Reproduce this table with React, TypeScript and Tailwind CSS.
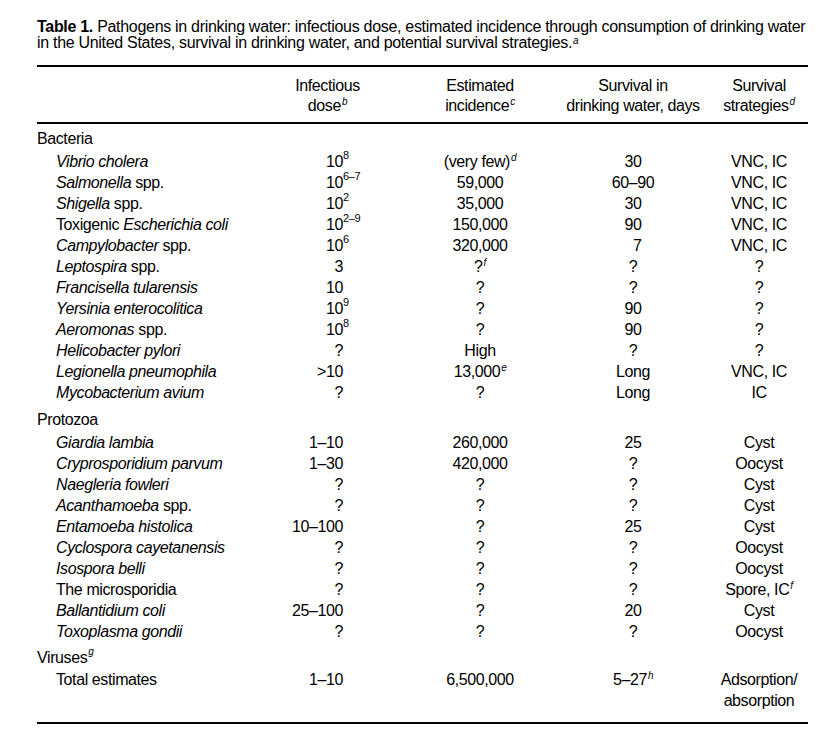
import React from "react";

type Row = {
    name: React.ReactNode;
    dose: React.ReactNode;
    inc: React.ReactNode;
    surv: React.ReactNode;
    strat: React.ReactNode;
};

// Footnote marker (italic letter, raised)
const Sup: React.FC<{ children: React.ReactNode; className?: string }> = ({ children, className }) => (
    <span className={`relative text-[10px] italic leading-none ml-[1px] ${className ?? "top-[-6px]"}`}>{children}</span>
);

// Power of ten, the exponent hangs past the column edge
const Pow: React.FC<{ exp: string }> = ({ exp }) => (
    <span className="relative">
        10
        <span className="absolute left-full top-[-3px] text-[11px] leading-none whitespace-nowrap">{exp}</span>
    </span>
);

const Sp: React.FC<{ name: string; rest?: string }> = ({ name, rest }) => (
    <>
        <i>{name}</i>
        {rest && <> {rest}</>}
    </>
);

const bacteria: Row[] = [
    { name: <Sp name="Vibrio cholera" />, dose: <Pow exp="8" />, inc: <>(very few)<Sup>d</Sup></>, surv: "30", strat: "VNC, IC" },
    { name: <Sp name="Salmonella" rest="spp." />, dose: <Pow exp="6–7" />, inc: "59,000", surv: "60–90", strat: "VNC, IC" },
    { name: <Sp name="Shigella" rest="spp." />, dose: <Pow exp="2" />, inc: "35,000", surv: "30", strat: "VNC, IC" },
    { name: <>Toxigenic <i>Escherichia coli</i></>, dose: <Pow exp="2–9" />, inc: "150,000", surv: "90", strat: "VNC, IC" },
    { name: <Sp name="Campylobacter" rest="spp." />, dose: <Pow exp="6" />, inc: "320,000", surv: <><span className="invisible">0</span>7</>, strat: "VNC, IC" },
    { name: <Sp name="Leptospira" rest="spp." />, dose: "3", inc: <>?<Sup>f</Sup></>, surv: "?", strat: "?" },
    { name: <Sp name="Francisella tularensis" />, dose: "10", inc: "?", surv: "?", strat: "?" },
    { name: <Sp name="Yersinia enterocolitica" />, dose: <Pow exp="9" />, inc: "?", surv: "90", strat: "?" },
    { name: <Sp name="Aeromonas" rest="spp." />, dose: <Pow exp="8" />, inc: "?", surv: "90", strat: "?" },
    { name: <Sp name="Helicobacter pylori" />, dose: "?", inc: "High", surv: "?", strat: "?" },
    { name: <Sp name="Legionella pneumophila" />, dose: <>&gt;10</>, inc: <>13,000<Sup>e</Sup></>, surv: "Long", strat: "VNC, IC" },
    { name: <Sp name="Mycobacterium avium" />, dose: "?", inc: "?", surv: "Long", strat: "IC" },
];

const protozoa: Row[] = [
    { name: <Sp name="Giardia lambia" />, dose: "1–10", inc: "260,000", surv: "25", strat: "Cyst" },
    { name: <Sp name="Cryprosporidium parvum" />, dose: "1–30", inc: "420,000", surv: "?", strat: "Oocyst" },
    { name: <Sp name="Naegleria fowleri" />, dose: "?", inc: "?", surv: "?", strat: "Cyst" },
    { name: <Sp name="Acanthamoeba" rest="spp." />, dose: "?", inc: "?", surv: "?", strat: "Cyst" },
    { name: <Sp name="Entamoeba histolica" />, dose: "10–100", inc: "?", surv: "25", strat: "Cyst" },
    { name: <Sp name="Cyclospora cayetanensis" />, dose: "?", inc: "?", surv: "?", strat: "Oocyst" },
    { name: <Sp name="Isospora belli" />, dose: "?", inc: "?", surv: "?", strat: "Oocyst" },
    { name: "The microsporidia", dose: "?", inc: "?", surv: "?", strat: <>Spore, IC<Sup>f</Sup></> },
    { name: <Sp name="Ballantidium coli" />, dose: "25–100", inc: "?", surv: "20", strat: "Cyst" },
    { name: <Sp name="Toxoplasma gondii" />, dose: "?", inc: "?", surv: "?", strat: "Oocyst" },
];

const cols = "grid grid-cols-[214px_153px_152px_154px_98px]";

const DataRow: React.FC<{ row: Row }> = ({ row }) => (
    <div className={`${cols} h-[21px] items-center`}>
        <div className="pl-[19px] whitespace-nowrap">{row.name}</div>
        <div className="text-right pr-[61px] whitespace-nowrap">{row.dose}</div>
        <div className="text-center whitespace-nowrap">{row.inc}</div>
        <div className="text-center whitespace-nowrap">{row.surv}</div>
        <div className="text-center whitespace-nowrap">{row.strat}</div>
    </div>
);

const Category: React.FC<{ children: React.ReactNode; className?: string }> = ({ children, className }) => (
    <div className={`h-[21px] flex items-center whitespace-nowrap ${className ?? ""}`}>{children}</div>
);

export default function App() {
    return (
        <div
            className="w-[829px] h-[733px] bg-white text-black overflow-hidden text-[16px] tracking-[-0.4px]"
            style={{ fontFamily: '"Liberation Sans", Arial, sans-serif' }}
        >
            <div className="ml-[37px] w-[771px] pt-[19px]">
                {/* Caption */}
                <p className="leading-[16px] whitespace-nowrap tracking-[-0.3px]">
                    <span className="font-bold">Table 1.</span> Pathogens in drinking water: infectious dose, estimated
                    incidence through consumption of drinking water
                    <br />
                    in the United States, survival in drinking water, and potential survival strategies.
                    <Sup className="top-[-4px]">a</Sup>
                </p>

                <div className="mt-[14px] h-[2px] bg-black" />

                {/* Column headings */}
                <div className={`${cols} leading-[20px] pt-[9px] pb-[6px]`}>
                    <div />
                    <div className="text-center">
                        Infectious
                        <br />
                        dose<Sup>b</Sup>
                    </div>
                    <div className="text-center">
                        Estimated
                        <br />
                        incidence<Sup>c</Sup>
                    </div>
                    <div className="text-center whitespace-nowrap">
                        Survival in
                        <br />
                        drinking water, days
                    </div>
                    <div className="text-center">
                        Survival
                        <br />
                        strategies<Sup>d</Sup>
                    </div>
                </div>

                <div className="h-[1.5px] bg-black" />

                {/* Body */}
                <div className="pt-[5px]">
                    <Category>Bacteria</Category>
                    {bacteria.map((r, i) => (
                        <DataRow key={`b${i}`} row={r} />
                    ))}

                    <Category className="mt-[8px]">Protozoa</Category>
                    {protozoa.map((r, i) => (
                        <DataRow key={`p${i}`} row={r} />
                    ))}

                    <Category className="mt-[7px]">
                        Viruses<Sup>g</Sup>
                    </Category>
                    <div className={`${cols} leading-[21px] items-start`}>
                        <div className="pl-[19px] whitespace-nowrap">Total estimates</div>
                        <div className="text-right pr-[61px]">1–10</div>
                        <div className="text-center">6,500,000</div>
                        <div className="text-center">
                            5–27<Sup>h</Sup>
                        </div>
                        <div className="text-center">
                            Adsorption/
                            <br />
                            absorption
                        </div>
                    </div>
                </div>

                <div className="mt-[11px] h-[2px] bg-black" />
            </div>
        </div>
    );
}
